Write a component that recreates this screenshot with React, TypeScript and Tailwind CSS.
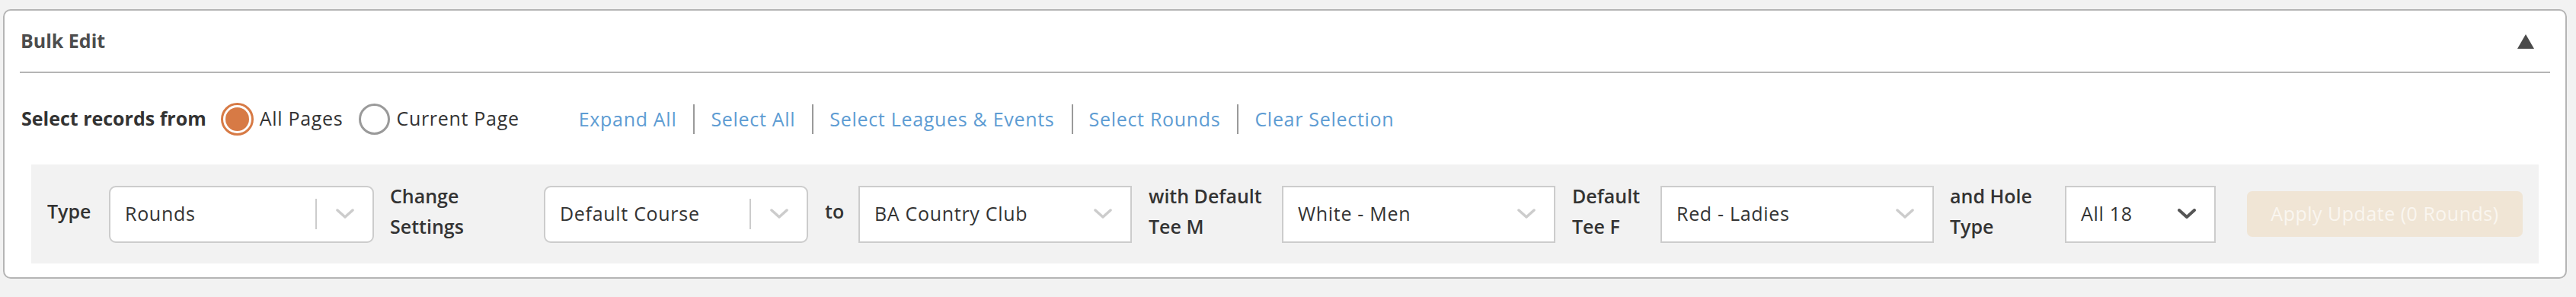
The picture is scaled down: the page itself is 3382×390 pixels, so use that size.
import React from "react";

const font = { fontFamily: "'Open Sans', 'Liberation Sans', sans-serif" };

function Chevron({ dark }: { dark?: boolean }) {
  return (
    <svg width="24" height="14" viewBox="0 0 24 14" className="shrink-0">
      <polyline
        points="2,2 12,11 22,2"
        fill="none"
        stroke={dark ? "#555555" : "#cccccc"}
        strokeWidth={dark ? 4 : 3.5}
        strokeLinecap="round"
        strokeLinejoin="round"
      />
    </svg>
  );
}

function RoundSelect({ value, width, ml }: { value: string; width: string; ml: string }) {
  return (
    <div className={`${width} ${ml} h-[75px] shrink-0 rounded-[9px] border-2 border-[#cccccc] bg-white flex items-center`}>
      <span className="pl-[19px] flex-1 text-[25px] tracking-[0.7px] text-[#333333]">{value}</span>
      <div className="w-[2px] h-[40px] bg-[#cccccc]"></div>
      <div className="w-[73px] flex items-center justify-center">
        <Chevron />
      </div>
    </div>
  );
}

function SquareSelect({ value, width, ml, dark }: { value: string; width: string; ml: string; dark?: boolean }) {
  return (
    <div className={`${width} ${ml} h-[75px] shrink-0 border-2 border-[#cccccc] bg-white flex items-center`}>
      <span className="pl-[19px] flex-1 text-[25px] tracking-[0.7px] text-[#333333]">{value}</span>
      <div className="pr-[24px] flex items-center">
        <Chevron dark={dark} />
      </div>
    </div>
  );
}

function Label({ children, width, ml }: { children: React.ReactNode; width: string; ml: string }) {
  return (
    <div className={`${width} ${ml} mb-[8px] shrink-0 text-[25px] leading-[40px] font-semibold text-[#333333]`}>{children}</div>
  );
}

function Radio({ checked, label }: { checked?: boolean; label: string }) {
  return (
    <div className="flex items-center">
      {checked ? (
        <div className="w-[43px] h-[43px] rounded-full border-[3px] border-[#d77a45] p-[3px] bg-white">
          <div className="w-full h-full rounded-full bg-[#d77a45]"></div>
        </div>
      ) : (
        <div className="w-[41px] h-[41px] rounded-full border-[3px] border-[#9a9a9a] bg-white"></div>
      )}
      <span className="ml-[8px] text-[25px] tracking-[0.7px] text-[#333333]">{label}</span>
    </div>
  );
}

export default function App() {
  const links = ["Expand All", "Select All", "Select Leagues & Events", "Select Rounds", "Clear Selection"];
  return (
    <div className="w-[3382px] h-[390px] bg-[#f2f2f2] pt-[12px] pl-[4px]" style={font}>
      <div className="w-[3366px] rounded-[10px] border-2 border-[#b5b5b5] bg-white">
        <div className="h-[80px] flex items-center justify-between pl-[21px] pr-[41px] rounded-t-[10px]">
          <span className="text-[25px] font-bold text-[#4d4d4d]">Bulk Edit</span>
          <svg width="22" height="19" viewBox="0 0 22 19">
            <polygon points="11,0 22,19 0,19" fill="#4a4a4a" />
          </svg>
        </div>
        <div className="mx-[20px] h-[2px] bg-[#b5b5b5]"></div>
        <div className="pt-[38px] pb-[18px]">
          <div className="h-[44px] flex items-center pl-[22px]">
            <span className="text-[25px] font-bold text-[#333333]">Select records from</span>
            <div className="ml-[19px]">
              <Radio checked label="All Pages" />
            </div>
            <div className="ml-[21px]">
              <Radio label="Current Page" />
            </div>
            <div className="ml-[78px] flex items-center">
              {links.map((l, i) => (
                <span
                  key={l}
                  className={`text-[25px] tracking-[0.7px] text-[#5d9cd3] leading-[39px] ${i === 0 ? "pr-[22px]" : "pl-[21px] pr-[22px] border-l-2 border-[#9a9a9a]"}`}
                >
                  {l}
                </span>
              ))}
            </div>
          </div>
          <div className="mt-[38px] mx-[35px] h-[130px] bg-[#f2f2f2] flex items-center pl-[21px]">
            <Label width="w-[60px]" ml="ml-0">Type</Label>
            <RoundSelect value="Rounds" width="w-[348px]" ml="ml-[21px]" />
            <Label width="w-[181px]" ml="ml-[21px]">Change<br />Settings</Label>
            <RoundSelect value="Default Course" width="w-[347px]" ml="ml-[21px]" />
            <Label width="w-[23px]" ml="ml-[22px]">to</Label>
            <SquareSelect value="BA Country Club" width="w-[359px]" ml="ml-[21px]" />
            <Label width="w-[154px]" ml="ml-[22px]">with Default<br />Tee M</Label>
            <SquareSelect value="White - Men" width="w-[359px]" ml="ml-[21px]" />
            <Label width="w-[95px]" ml="ml-[22px]">Default<br />Tee F</Label>
            <SquareSelect value="Red - Ladies" width="w-[359px]" ml="ml-[21px]" />
            <Label width="w-[130px]" ml="ml-[21px]">and Hole<br />Type</Label>
            <SquareSelect value="All 18" width="w-[198px]" ml="ml-[21px]" dark />
            <button className="ml-[41px] w-[362px] h-[60px] rounded-[7px] bg-[#f0e5d5] text-[25px] tracking-[0.5px] text-[#faf6f0]">
              Apply Update (0 Rounds)
            </button>
          </div>
        </div>
      </div>
    </div>
  );
}
